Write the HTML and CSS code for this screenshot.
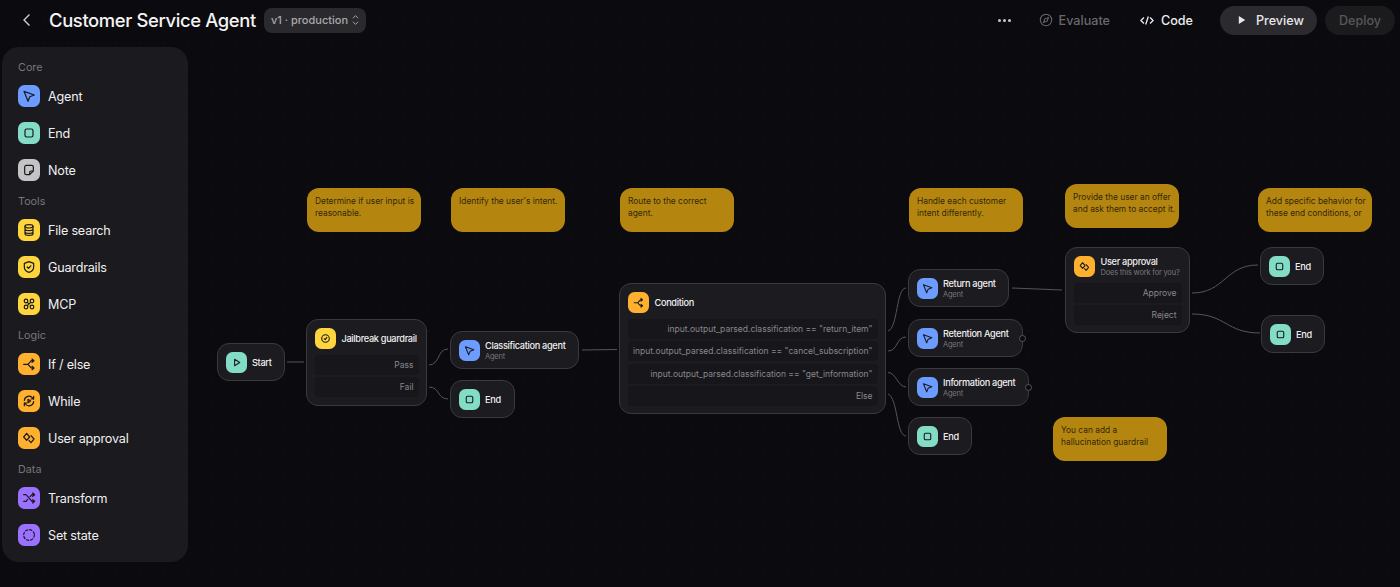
FILE: index.html
```html
<!DOCTYPE html>
<html lang="en">
<head>
<meta charset="utf-8">
<title>Customer Service Agent</title>
<link rel="stylesheet" href="styles.css">
</head>
<body>
<svg class="defs" width="0" height="0" aria-hidden="true">
  <symbol id="i-agent" viewBox="0 0 24 24"><path d="M4.500 5 20 10.500l-6.800 2.700L10.500 20z"/></symbol>
  <symbol id="i-end" viewBox="0 0 24 24"><rect x="6" y="6" width="12" height="12" rx="2.500"/></symbol>
  <symbol id="i-note" viewBox="0 0 24 24"><path d="M13 19H8a2.500 2.500 0 0 1-2.500-2.500V7.500A2.500 2.500 0 0 1 8 5h8a2.500 2.500 0 0 1 2.500 2.500V13.500zM13 19v-3.500a2 2 0 0 1 2-2h3.500"/></symbol>
  <symbol id="i-db" viewBox="0 0 24 24"><ellipse cx="12" cy="6.500" rx="6" ry="2.500"/><path d="M6 6.500v11c0 1.400 2.700 2.500 6 2.500s6-1.100 6-2.500v-11M6 10.500c0 1.400 2.700 2.500 6 2.500s6-1.100 6-2.500M6 14.500c0 1.400 2.700 2.500 6 2.500s6-1.100 6-2.500"/></symbol>
  <symbol id="i-shield" viewBox="0 0 24 24"><path d="M12 4 19 6.500V12c0 4-3 6.800-7 8-4-1.200-7-4-7-8V6.500z"/><path d="m9.300 12 2 2 3.400-3.800"/></symbol>
  <symbol id="i-mcp" viewBox="0 0 24 24"><circle cx="7.500" cy="7.500" r="2.700"/><circle cx="16.500" cy="7.500" r="2.700"/><circle cx="7.500" cy="16.500" r="2.700"/><circle cx="16.500" cy="16.500" r="2.700"/><path d="m9.500 14.500 5-5M9.500 9.500l5 5"/></symbol>
  <symbol id="i-branch" viewBox="0 0 24 24"><path d="M4 12.500h6.500l5-5.500H19M10.500 12.500l5 5.500H19M16.500 4.500 19.500 7l-3 2.500M16.500 15.500l3 2.500-3 2.500"/></symbol>
  <symbol id="i-while" viewBox="0 0 24 24"><path d="M5 11a7 7 0 0 1 12.500-3.500L19 9M19 5v4h-4M19 13a7 7 0 0 1-12.500 3.500L5 15M5 19v-4h4"/><path class="fill" d="m10.500 9.500 4 2.500-4 2.500z"/></symbol>
  <symbol id="i-approve" viewBox="0 0 24 24"><path d="M8.500 5 13 10.500 8.500 15.500 4 10.500z"/><path d="M15 8.500l4.500 5-4.500 5.500-3-3.300"/></symbol>
  <symbol id="i-shuffle" viewBox="0 0 24 24"><path d="M4 7h3.500l9 10H20M4 17h3.500l2.500-2.800M13.500 10 16.500 7H20M17.500 4.500 20.500 7l-3 2.500M17.500 14.500l3 2.500-3 2.500"/></symbol>
  <symbol id="i-state" viewBox="0 0 24 24"><circle cx="12" cy="12" r="8" stroke-dasharray="3.300 3"/></symbol>
  <symbol id="i-play" viewBox="0 0 24 24"><path d="M8.500 6 18 12l-9.500 6z"/></symbol>
  <symbol id="i-small-shield" viewBox="0 0 24 24"><circle cx="12" cy="12" r="7"/><path d="m9.500 12.500 2 1.500 3-4"/></symbol>
</svg>

<div class="canvas">
  <svg class="edges" width="1400" height="587" viewBox="0 0 1400 587" aria-hidden="true">
    <path d="M287 362H304"/>
    <path d="M429 365C440 365 437 349 448 349"/>
    <path d="M429 387C440 387 437 399 448 399"/>
    <path d="M582 350 617 349.500"/>
    <path d="M888 331C898 328 896 288 906 288"/>
    <path d="M888 351C898 351 896 337 906 337"/>
    <path d="M888 372.500C896 372.500 898 387 906 387"/>
    <path d="M888 394C898 398 896 436 906 436"/>
    <path d="M1012 288 1062 290"/>
    <path d="M1192 293C1225 293 1225 265 1258 265"/>
    <path d="M1192 314C1226 314 1226 333 1260 333"/>
  </svg>

  <div class="note n1">Determine if user input is reasonable.</div>
  <div class="note n2">Identify the user's intent.</div>
  <div class="note n3">Route to the correct agent.</div>
  <div class="note n4">Handle each customer intent differently.</div>
  <div class="note n5">Provide the user an offer and ask them to accept it.</div>
  <div class="note n6">Add specific behavior for these end conditions, or</div>
  <div class="note n7">You can add a hallucination guardrail</div>

  <div class="node simple start">
    <span class="ico teal"><svg><use href="#i-play"/></svg></span>
    <span class="name">Start</span>
  </div>

  <div class="node block jail">
    <div class="head">
      <span class="ico yellow"><svg><use href="#i-small-shield"/></svg></span>
      <span class="name">Jailbreak guardrail</span>
    </div>
    <div class="rows">
      <div class="row">Pass</div>
      <div class="row">Fail</div>
    </div>
  </div>

  <div class="node simple classify">
    <span class="ico blue"><svg><use href="#i-agent"/></svg></span>
    <div class="label"><span class="name">Classification agent</span><span class="sub">Agent</span></div>
  </div>

  <div class="node simple end1">
    <span class="ico teal"><svg><use href="#i-end"/></svg></span>
    <span class="name">End</span>
  </div>

  <div class="node block condition">
    <div class="head">
      <span class="ico orange"><svg><use href="#i-branch"/></svg></span>
      <span class="name">Condition</span>
    </div>
    <div class="rows">
      <div class="row">input.output_parsed.classification == "return_item"</div>
      <div class="row">input.output_parsed.classification == "cancel_subscription"</div>
      <div class="row">input.output_parsed.classification == "get_information"</div>
      <div class="row">Else</div>
    </div>
  </div>

  <div class="node simple ret">
    <span class="ico blue"><svg><use href="#i-agent"/></svg></span>
    <div class="label"><span class="name">Return agent</span><span class="sub">Agent</span></div>
  </div>

  <div class="node simple retention">
    <span class="ico blue"><svg><use href="#i-agent"/></svg></span>
    <div class="label"><span class="name">Retention Agent</span><span class="sub">Agent</span></div>
    <span class="handle"></span>
  </div>

  <div class="node simple info">
    <span class="ico blue"><svg><use href="#i-agent"/></svg></span>
    <div class="label"><span class="name">Information agent</span><span class="sub">Agent</span></div>
    <span class="handle"></span>
  </div>

  <div class="node simple end2">
    <span class="ico teal"><svg><use href="#i-end"/></svg></span>
    <span class="name">End</span>
  </div>

  <div class="node block approval">
    <div class="head">
      <span class="ico orange"><svg><use href="#i-approve"/></svg></span>
      <div class="label"><span class="name">User approval</span><span class="sub">Does this work for you?</span></div>
    </div>
    <div class="rows">
      <div class="row">Approve</div>
      <div class="row">Reject</div>
    </div>
  </div>

  <div class="node simple end3">
    <span class="ico teal"><svg><use href="#i-end"/></svg></span>
    <span class="name">End</span>
  </div>

  <div class="node simple end4">
    <span class="ico teal"><svg><use href="#i-end"/></svg></span>
    <span class="name">End</span>
  </div>
</div>

<header class="topbar">
  <svg class="back" viewBox="0 0 12 16"><path d="M8.500 2.500 3 8l5.500 5.500"/></svg>
  <h1 class="title">Customer Service Agent</h1>
  <div class="version">
    <span>v1 · production</span>
    <svg viewBox="0 0 10 16"><path d="M2 6l3-3 3 3M2 10l3 3 3-3"/></svg>
  </div>
  <div class="actions">
    <span class="more"><i></i><i></i><i></i></span>
    <span class="action muted">
      <svg viewBox="0 0 16 16"><circle cx="8" cy="8" r="6.500"/><path d="M10.800 5.200 9.300 9.300 5.200 10.800 6.700 6.700z"/></svg>
      Evaluate
    </span>
    <span class="action code">
      <svg viewBox="0 0 16 12"><path d="M4.500 2.500 1 6l3.500 3.500M11.500 2.500 15 6l-3.500 3.500M9.500 1.500 6.500 10.500"/></svg>
      Code
    </span>
    <span class="btn preview">
      <svg viewBox="0 0 10 12"><path d="M1 1l8 5-8 5z"/></svg>
      Preview
    </span>
    <span class="btn deploy">Deploy</span>
  </div>
</header>

<aside class="palette">
  <div class="group">Core</div>
  <div class="item"><span class="ico blue"><svg><use href="#i-agent"/></svg></span>Agent</div>
  <div class="item"><span class="ico teal"><svg><use href="#i-end"/></svg></span>End</div>
  <div class="item"><span class="ico gray"><svg><use href="#i-note"/></svg></span>Note</div>
  <div class="group">Tools</div>
  <div class="item"><span class="ico yellow"><svg><use href="#i-db"/></svg></span>File search</div>
  <div class="item"><span class="ico yellow"><svg><use href="#i-shield"/></svg></span>Guardrails</div>
  <div class="item"><span class="ico yellow"><svg><use href="#i-mcp"/></svg></span>MCP</div>
  <div class="group">Logic</div>
  <div class="item"><span class="ico orange"><svg><use href="#i-branch"/></svg></span>If / else</div>
  <div class="item"><span class="ico orange"><svg><use href="#i-while"/></svg></span>While</div>
  <div class="item"><span class="ico orange"><svg><use href="#i-approve"/></svg></span>User approval</div>
  <div class="group">Data</div>
  <div class="item"><span class="ico purple"><svg><use href="#i-shuffle"/></svg></span>Transform</div>
  <div class="item"><span class="ico purple"><svg><use href="#i-state"/></svg></span>Set state</div>
</aside>
</body>
</html>
```

FILE: styles.css
```css
* { box-sizing: border-box; }

html, body {
  margin: 0;
  height: 100%;
  overflow: hidden;
}

body {
  background: #0b0b0f;
  color: #f2f2f2;
  font-family: Inter, "Liberation Sans", sans-serif;
}

.defs { position: absolute; }

/* Free canvas behind the chrome */
.canvas {
  position: absolute;
  inset: 0;
  background-image: radial-gradient(circle, #121216 0.6px, transparent 0.9px);
  background-size: 24px 24px;
  background-position: 8px 7px;
}

.edges {
  position: absolute;
  inset: 0;
  fill: none;
  stroke: #55555a;
  stroke-width: 1;
}

/* Top bar */
.topbar {
  position: relative;
  display: flex;
  align-items: center;
  height: 40px;
  padding: 0 5px 0 21px;
}

.back {
  width: 12px;
  height: 16px;
  margin-right: 16px;
  fill: none;
  stroke: #cfcfd2;
  stroke-width: 1.400;
}

.title {
  margin: 0 8px 0 0;
  font-size: 18.400px;
  font-weight: 500;
  letter-spacing: -0.360px;
  white-space: nowrap;
  color: #f4f4f4;
}

.version {
  display: flex;
  align-items: center;
  gap: 3px;
  height: 25px;
  padding: 0 6px 0 7px;
  border-radius: 8px;
  background: #2a2a2e;
  color: #a8a8ac;
  font-size: 11px;
  font-weight: 500;
  white-space: nowrap;
}

.version svg {
  width: 9px;
  height: 14px;
  fill: none;
  stroke: #a8a8ac;
  stroke-width: 1.100;
}

.actions {
  display: flex;
  align-items: center;
  margin-left: auto;
  font-size: 12.600px;
  font-weight: 500;
}

.more {
  display: flex;
  gap: 2px;
  margin-right: 28px;
}

.more i {
  width: 3px;
  height: 3px;
  border-radius: 50%;
  background: #c8c8cc;
}

.action {
  display: flex;
  align-items: center;
  white-space: nowrap;
}

.action svg {
  fill: none;
  stroke: currentColor;
}

.muted {
  gap: 6px;
  color: #68686c;
  margin-right: 30px;
}

.muted svg {
  width: 14px;
  height: 14px;
  stroke-width: 1.200;
}

.code {
  gap: 7px;
  color: #ededed;
  margin-right: 27px;
}

.code svg {
  width: 14px;
  height: 11px;
  stroke-width: 1.500;
}

.btn {
  display: flex;
  align-items: center;
  height: 29px;
  border-radius: 15px;
  white-space: nowrap;
}

.preview {
  gap: 10px;
  width: 97px;
  padding-left: 18px;
  background: #2b2b2f;
  color: #e8e8e8;
  margin-right: 8px;
}

.preview svg {
  width: 8px;
  height: 10px;
  fill: #e8e8e8;
}

.deploy {
  width: 70px;
  justify-content: center;
  background: #1b1b1e;
  color: #57575b;
}

/* Palette */
.palette {
  position: relative;
  width: 186px;
  height: 515px;
  margin: 7px 0 0 2px;
  padding: 7.500px 16px 0;
  border-radius: 17px;
  background: #1b1a1e;
}

.group {
  display: flex;
  align-items: center;
  height: 23px;
  padding-top: 2px;
  font-size: 10.800px;
  color: #77777b;
}

.item {
  display: flex;
  align-items: center;
  gap: 8px;
  height: 37px;
  font-size: 12.600px;
  letter-spacing: -0.200px;
  color: #f0f0f0;
  white-space: nowrap;
}

/* Icon tiles */
.ico {
  display: flex;
  flex: none;
  align-items: center;
  justify-content: center;
  width: 22px;
  height: 22px;
  border-radius: 6.500px;
}

.ico svg {
  width: 16px;
  height: 16px;
  fill: none;
  stroke: #1a1a1e;
  stroke-width: 1.800;
  stroke-linejoin: round;
  stroke-linecap: round;
}

.ico .fill { fill: #1a1a1e; stroke: none; }

.blue { background: #6c9cff; }
.teal { background: #83dcc5; }
.gray { background: #c4c4c6; }
.yellow { background: #ffd53e; }
.orange { background: #ffb02e; }
.purple { background: #9b72ff; }

/* Sticky notes */
.note {
  position: absolute;
  width: 114px;
  height: 44px;
  padding: 7px 2px 0 8px;
  border-radius: 12px;
  background: #b5860f;
  color: #33260a;
  font-size: 8.400px;
  line-height: 12px;
}

.n1 { left: 307px; top: 188px; }
.n2 { left: 451px; top: 188px; }
.n3 { left: 620px; top: 188px; }
.n4 { left: 909px; top: 188px; }
.n5 { left: 1065px; top: 184px; }
.n6 { left: 1258px; top: 188px; }
.n7 { left: 1053px; top: 417px; }

/* Diagram nodes */
.node {
  position: absolute;
  border: 1px solid #3a393e;
  border-radius: 12px;
  background: #1c1b1f;
}

.node .ico svg {
  width: 13px;
  height: 13px;
  stroke-width: 2;
}

.simple {
  display: flex;
  align-items: center;
  gap: 5.500px;
  height: 38px;
  padding-left: 7.500px;
}

.simple .ico { width: 21px; height: 21px; }

.name {
  font-size: 9.200px;
  font-weight: 500;
  letter-spacing: -0.320px;
  color: #f0f0f0;
  white-space: nowrap;
}

.sub {
  font-size: 7.500px;
  letter-spacing: -0.200px;
  color: #77777b;
  white-space: nowrap;
}

.label {
  display: flex;
  flex-direction: column;
  gap: 1px;
}

.block { padding: 7.500px; }

.head {
  display: flex;
  align-items: center;
  gap: 5.500px;
}

.head .ico { width: 21.500px; height: 21.500px; }

.rows {
  display: flex;
  flex-direction: column;
  gap: 2.500px;
  margin-top: 5.500px;
}

.row {
  height: 20px;
  padding-right: 5px;
  border-radius: 4px;
  background: #17161a;
  color: #88888c;
  font-size: 8.500px;
  line-height: 20px;
  text-align: right;
  white-space: nowrap;
}

.handle {
  position: absolute;
  right: -4px;
  top: 15px;
  width: 7px;
  height: 7px;
  border: 1px solid #55555a;
  border-radius: 50%;
  background: #0b0b0f;
}

.start { left: 217px; top: 343px; width: 68px; }
.jail { left: 306px; top: 319px; width: 121px; height: 87px; }
.classify { left: 450px; top: 331px; width: 129px; }
.end1 { left: 450px; top: 380px; width: 65px; }
.condition { left: 619px; top: 283px; width: 267px; height: 131px; }
.ret { left: 908px; top: 269px; width: 101px; }
.retention { left: 908px; top: 319px; width: 115px; }
.info { left: 908px; top: 368px; width: 121px; }
.end2 { left: 908px; top: 417px; width: 64px; }
.approval { left: 1065px; top: 247px; width: 125px; height: 86px; }
.end3 { left: 1260px; top: 247px; width: 64px; }
.end4 { left: 1261px; top: 315px; width: 64px; }
```
